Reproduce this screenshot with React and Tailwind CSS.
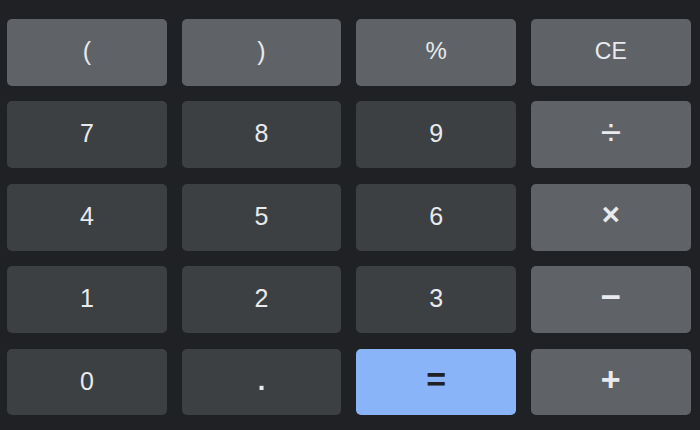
import React from "react";

const L = "bg-[#5f6368] text-[#e8eaed]";
const D = "bg-[#3c4043] text-[#e8eaed]";
const B = "bg-[#8ab4f8] text-[#202124]";

const keys = [
  ["(", L, "text-[25px]"], [")", L, "text-[25px]"], ["%", L, "text-[24px]"], ["CE", L, "text-[23px]"],
  ["7", D, "text-[25px]"], ["8", D, "text-[25px]"], ["9", D, "text-[25px]"], ["÷", L, "text-[37px] -translate-y-[1px]"],
  ["4", D, "text-[25px]"], ["5", D, "text-[25px]"], ["6", D, "text-[25px]"], ["×", L, "text-[31px] font-bold -translate-y-[2px]"],
  ["1", D, "text-[25px]"], ["2", D, "text-[25px]"], ["3", D, "text-[25px]"], ["−", L, "text-[35px] font-bold -translate-y-[2px]"],
  ["0", D, "text-[25px]"], [".", D, "text-[27px] font-bold"], ["=", B, "text-[34px] font-bold -translate-y-[2px]"], ["+", L, "text-[34px] font-bold -translate-y-[2px]"],
];

export default function App() {
  return (
    <div
      className="w-[700px] h-[430px] bg-[#202124] pt-[19px] pl-[7px]"
      style={{ fontFamily: '"Liberation Sans", Arial, sans-serif' }}
    >
      <div className="grid grid-cols-[repeat(4,159.67px)] auto-rows-[66.67px] gap-x-[15px] gap-y-[15.8px]">
        {keys.map(([label, color, size], i) => (
          <div
            key={i}
            className={`${color} rounded-[5px] flex items-center justify-center leading-none`}
          >
            <span className={`${size} -mt-[2px]`}>{label}</span>
          </div>
        ))}
      </div>
    </div>
  );
}
